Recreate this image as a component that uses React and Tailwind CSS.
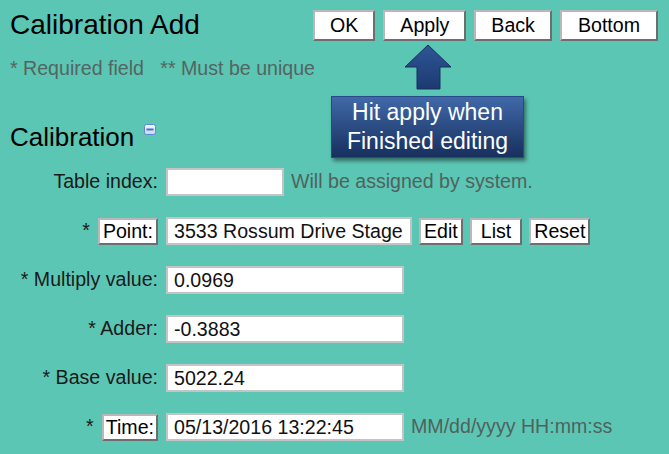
import React from 'react';

const font = { fontFamily: '"Liberation Sans", Arial, sans-serif' };

function Btn({ children, className = '' }) {
  return (
    <button
      className={`bg-white text-black text-[19.6px] leading-[23px] border-2 border-[#b8b8b8] border-r-[#6e6e6e] border-b-[#6e6e6e] ${className}`}
    >
      {children}
    </button>
  );
}

function Field({ value = '', width }) {
  return (
    <div
      className="h-[28px] bg-white border-2 border-[#c4c4c4] pl-[6px] text-[19.6px] leading-[24px] text-[#111] whitespace-nowrap overflow-hidden"
      style={{ width }}
    >
      {value}
    </div>
  );
}

function Row({ label, children }) {
  return (
    <div className="flex items-center h-[28px]">
      <div className="w-[158px] flex justify-end items-center text-[19.6px] text-[#1a1a1a] whitespace-nowrap">{label}</div>
      <div className="ml-2 flex items-center gap-[7px]">{children}</div>
    </div>
  );
}

function CollapseIcon() {
  return (
    <svg width="12" height="11" viewBox="0 0 12 11" className="ml-[10px] -mt-[16px]">
      <defs>
        <linearGradient id="ci" x1="0" y1="0" x2="0" y2="1">
          <stop offset="0" stopColor="#f4f8ff" />
          <stop offset="1" stopColor="#c9d8f6" />
        </linearGradient>
      </defs>
      <rect x="0.5" y="0.5" width="11" height="10" rx="2" fill="url(#ci)" stroke="#5f86db" />
      <rect x="2.5" y="4.5" width="7" height="2" fill="#4a6fc4" />
    </svg>
  );
}

function Arrow() {
  return (
    <svg width="48" height="46" viewBox="0 0 48 46" className="absolute left-[404px] top-[44px]">
      <defs>
        <linearGradient id="ar" x1="0" y1="0" x2="0" y2="1">
          <stop offset="0" stopColor="#2f5697" />
          <stop offset="1" stopColor="#1c3a70" />
        </linearGradient>
      </defs>
      <path d="M24 1 L47 23 L36 23 L36 45 L13 45 L13 23 L1 23 Z" fill="url(#ar)" stroke="#17305c" strokeWidth="1" />
    </svg>
  );
}

export default function App() {
  return (
    <div className="relative w-[669px] h-[454px] overflow-hidden bg-[#5cc6b5]" style={font}>
      {/* header */}
      <div className="flex items-center justify-between pl-[10px] pr-[11px] pt-[9px]">
        <h1 className="text-[28px] leading-[32px] text-black">Calibration Add</h1>
        <div className="flex gap-[8px] h-[31px]">
          <Btn className="px-[15px]">OK</Btn>
          <Btn className="px-[15px]">Apply</Btn>
          <Btn className="px-[15px]">Back</Btn>
          <Btn className="px-[16px]">Bottom</Btn>
        </div>
      </div>

      <p className="pl-[10px] mt-[16px] text-[19.6px] leading-[22px] text-[#536560] whitespace-pre">
        {'* Required field   ** Must be unique'}
      </p>

      <h2 className="pl-[10px] mt-[44px] flex items-center text-[26px] leading-[28px] text-black">
        Calibration
        <CollapseIcon />
      </h2>

      {/* form */}
      <div className="mt-[17px] flex flex-col gap-[21px]">
        <Row label="Table index:">
          <Field width={118} />
          <span className="text-[19.6px] text-[#4f625d] whitespace-nowrap">Will be assigned by system.</span>
        </Row>
        <Row label={<><span className="mr-[8px]">*</span><Btn className="px-[3px] h-[27px]">Point:</Btn></>}>
          <Field width={246} value="3533 Rossum Drive Stage" />
          <div className="flex gap-[7px]">
            <Btn className="px-[3px] h-[27px]">Edit</Btn>
            <Btn className="px-[9px] h-[27px]">List</Btn>
            <Btn className="px-[3px] h-[27px]">Reset</Btn>
          </div>
        </Row>
        <Row label="* Multiply value:">
          <Field width={238} value="0.0969" />
        </Row>
        <Row label="* Adder:">
          <Field width={238} value="-0.3883" />
        </Row>
        <Row label="* Base value:">
          <Field width={238} value="5022.24" />
        </Row>
        <Row label={<><span className="mr-[8px]">*</span><Btn className="px-[2px] h-[27px]">Time:</Btn></>}>
          <Field width={238} value="05/13/2016 13:22:45" />
          <span className="text-[19.6px] text-[#4f625d] whitespace-nowrap">MM/dd/yyyy HH:mm:ss</span>
        </Row>
      </div>

      {/* callout overlay */}
      <Arrow />
      <div className="absolute left-[331px] top-[96px] w-[193px] h-[62px] border border-[#284a86] bg-gradient-to-b from-[#4169a9] to-[#17305e] shadow-[2px_3px_4px_rgba(0,0,0,0.45)] flex flex-col items-center justify-center text-white text-[23px] leading-[29px]">
        <span>Hit apply when</span>
        <span>Finished editing</span>
      </div>
    </div>
  );
}
